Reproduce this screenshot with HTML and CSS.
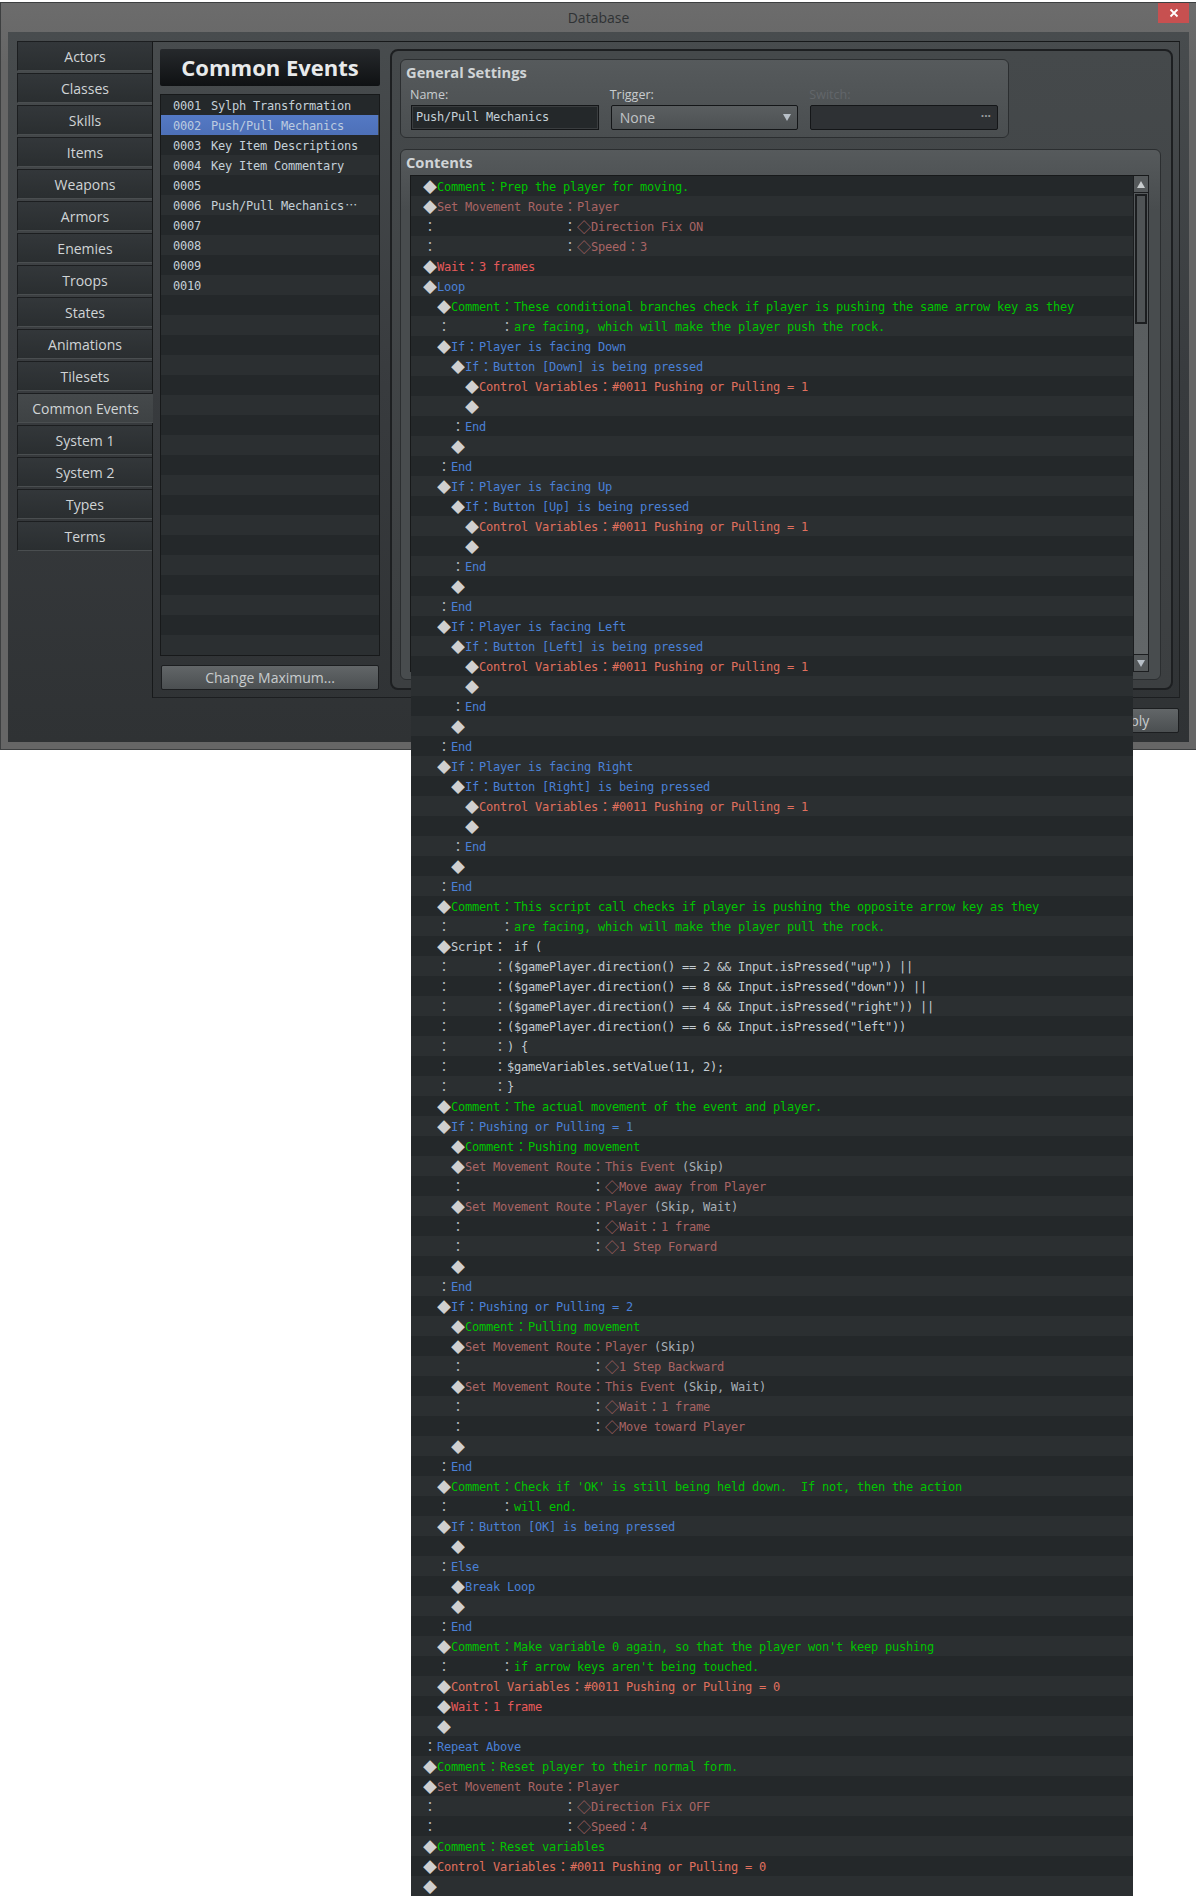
FILE: index.html
```html
<!DOCTYPE html>
<html lang="en">
<head>
  <meta charset="UTF-8">
  <title>Database</title>
  <link rel="stylesheet" href="styles.css">
</head>
<body>
  <div class="window">
    <div class="title">
      Database
      <div class="close">
        <svg width="10" height="10" viewBox="0 0 10 10"><path d="M1.5 1.5l7 7M8.5 1.5l-7 7" stroke="#fff" stroke-width="1.8" fill="none"/></svg>
      </div>
    </div>
    <div class="inner">
      <div class="main">
        <ul class="tabs">
          <li>Actors</li>
          <li>Classes</li>
          <li>Skills</li>
          <li>Items</li>
          <li>Weapons</li>
          <li>Armors</li>
          <li>Enemies</li>
          <li>Troops</li>
          <li>States</li>
          <li>Animations</li>
          <li>Tilesets</li>
          <li class="active">Common Events</li>
          <li>System 1</li>
          <li>System 2</li>
          <li>Types</li>
          <li>Terms</li>
        </ul>
        <div class="frame">
          <div class="leftcol">
            <div class="heading">Common Events</div>
            <ul class="evlist">
              <li><span class="num">0001</span>Sylph Transformation</li>
              <li class="sel"><span class="num">0002</span>Push/Pull Mechanics</li>
              <li><span class="num">0003</span>Key Item Descriptions</li>
              <li><span class="num">0004</span>Key Item Commentary</li>
              <li><span class="num">0005</span></li>
              <li><span class="num">0006</span>Push/Pull Mechanics<span class="more">⋯</span></li>
              <li><span class="num">0007</span></li>
              <li><span class="num">0008</span></li>
              <li><span class="num">0009</span></li>
              <li><span class="num">0010</span></li>
              <li></li><li></li><li></li><li></li><li></li><li></li><li></li><li></li><li></li>
              <li></li><li></li><li></li><li></li><li></li><li></li><li></li><li></li><li></li>
            </ul>
            <div class="btn maxbtn">Change Maximum...</div>
          </div>
          <div class="rightcol">
            <div class="group general">
              <h3>General Settings</h3>
              <div class="fields">
                <div class="field">
                  <label>Name:</label>
                  <div class="input">Push/Pull Mechanics</div>
                </div>
                <div class="field">
                  <label>Trigger:</label>
                  <div class="select">None<span class="arrow-down"></span></div>
                </div>
                <div class="field off">
                  <label>Switch:</label>
                  <div class="picker">...</div>
                </div>
              </div>
            </div>
            <div class="group contents">
              <h3>Contents</h3>
              <div class="listwrap">
                <div class="cmds">
<div class="row com"><i>◆</i>Comment<b>：</b>Prep the player for moving.</div>
<div class="row route"><i>◆</i>Set Movement Route<b>：</b>Player</div>
<div class="row route"><i class="cc">：</i>                  <b class="cc">：</b><i class="h">◇</i>Direction Fix ON</div>
<div class="row route"><i class="cc">：</i>                  <b class="cc">：</b><i class="h">◇</i>Speed<b>：</b>3</div>
<div class="row wait"><i>◆</i>Wait<b>：</b>3 frames</div>
<div class="row flow"><i>◆</i>Loop</div>
<div class="row com l1"><i>◆</i>Comment<b>：</b>These conditional branches check if player is pushing the same arrow key as they</div>
<div class="row com l1"><i class="cc">：</i>       <b class="cc">：</b>are facing, which will make the player push the rock.</div>
<div class="row flow l1"><i>◆</i>If<b>：</b>Player is facing Down</div>
<div class="row flow l2"><i>◆</i>If<b>：</b>Button [Down] is being pressed</div>
<div class="row vars l3"><i>◆</i>Control Variables<b>：</b>#0011 Pushing or Pulling = 1</div>
<div class="row l3"><i>◆</i></div>
<div class="row flow l2"><i class="cc">：</i>End</div>
<div class="row l2"><i>◆</i></div>
<div class="row flow l1"><i class="cc">：</i>End</div>
<div class="row flow l1"><i>◆</i>If<b>：</b>Player is facing Up</div>
<div class="row flow l2"><i>◆</i>If<b>：</b>Button [Up] is being pressed</div>
<div class="row vars l3"><i>◆</i>Control Variables<b>：</b>#0011 Pushing or Pulling = 1</div>
<div class="row l3"><i>◆</i></div>
<div class="row flow l2"><i class="cc">：</i>End</div>
<div class="row l2"><i>◆</i></div>
<div class="row flow l1"><i class="cc">：</i>End</div>
<div class="row flow l1"><i>◆</i>If<b>：</b>Player is facing Left</div>
<div class="row flow l2"><i>◆</i>If<b>：</b>Button [Left] is being pressed</div>
<div class="row vars l3"><i>◆</i>Control Variables<b>：</b>#0011 Pushing or Pulling = 1</div>
<div class="row l3"><i>◆</i></div>
<div class="row flow l2"><i class="cc">：</i>End</div>
<div class="row l2"><i>◆</i></div>
<div class="row flow l1"><i class="cc">：</i>End</div>
<div class="row flow l1"><i>◆</i>If<b>：</b>Player is facing Right</div>
<div class="row flow l2"><i>◆</i>If<b>：</b>Button [Right] is being pressed</div>
<div class="row vars l3"><i>◆</i>Control Variables<b>：</b>#0011 Pushing or Pulling = 1</div>
<div class="row l3"><i>◆</i></div>
<div class="row flow l2"><i class="cc">：</i>End</div>
<div class="row l2"><i>◆</i></div>
<div class="row flow l1"><i class="cc">：</i>End</div>
<div class="row com l1"><i>◆</i>Comment<b>：</b>This script call checks if player is pushing the opposite arrow key as they</div>
<div class="row com l1"><i class="cc">：</i>       <b class="cc">：</b>are facing, which will make the player pull the rock.</div>
<div class="row script l1"><i>◆</i>Script<b>：</b> if (</div>
<div class="row script l1"><i class="cc">：</i>      <b class="cc">：</b>($gamePlayer.direction() == 2 &amp;&amp; Input.isPressed("up")) ||</div>
<div class="row script l1"><i class="cc">：</i>      <b class="cc">：</b>($gamePlayer.direction() == 8 &amp;&amp; Input.isPressed("down")) ||</div>
<div class="row script l1"><i class="cc">：</i>      <b class="cc">：</b>($gamePlayer.direction() == 4 &amp;&amp; Input.isPressed("right")) ||</div>
<div class="row script l1"><i class="cc">：</i>      <b class="cc">：</b>($gamePlayer.direction() == 6 &amp;&amp; Input.isPressed("left"))</div>
<div class="row script l1"><i class="cc">：</i>      <b class="cc">：</b>) {</div>
<div class="row script l1"><i class="cc">：</i>      <b class="cc">：</b>$gameVariables.setValue(11, 2);</div>
<div class="row script l1"><i class="cc">：</i>      <b class="cc">：</b>}</div>
<div class="row com l1"><i>◆</i>Comment<b>：</b>The actual movement of the event and player.</div>
<div class="row flow l1"><i>◆</i>If<b>：</b>Pushing or Pulling = 1</div>
<div class="row com l2"><i>◆</i>Comment<b>：</b>Pushing movement</div>
<div class="row route l2"><i>◆</i>Set Movement Route<b>：</b>This Event <span class="opt">(Skip)</span></div>
<div class="row route l2"><i class="cc">：</i>                  <b class="cc">：</b><i class="h">◇</i>Move away from Player</div>
<div class="row route l2"><i>◆</i>Set Movement Route<b>：</b>Player <span class="opt">(Skip, Wait)</span></div>
<div class="row route l2"><i class="cc">：</i>                  <b class="cc">：</b><i class="h">◇</i>Wait<b>：</b>1 frame</div>
<div class="row route l2"><i class="cc">：</i>                  <b class="cc">：</b><i class="h">◇</i>1 Step Forward</div>
<div class="row l2"><i>◆</i></div>
<div class="row flow l1"><i class="cc">：</i>End</div>
<div class="row flow l1"><i>◆</i>If<b>：</b>Pushing or Pulling = 2</div>
<div class="row com l2"><i>◆</i>Comment<b>：</b>Pulling movement</div>
<div class="row route l2"><i>◆</i>Set Movement Route<b>：</b>Player <span class="opt">(Skip)</span></div>
<div class="row route l2"><i class="cc">：</i>                  <b class="cc">：</b><i class="h">◇</i>1 Step Backward</div>
<div class="row route l2"><i>◆</i>Set Movement Route<b>：</b>This Event <span class="opt">(Skip, Wait)</span></div>
<div class="row route l2"><i class="cc">：</i>                  <b class="cc">：</b><i class="h">◇</i>Wait<b>：</b>1 frame</div>
<div class="row route l2"><i class="cc">：</i>                  <b class="cc">：</b><i class="h">◇</i>Move toward Player</div>
<div class="row l2"><i>◆</i></div>
<div class="row flow l1"><i class="cc">：</i>End</div>
<div class="row com l1"><i>◆</i>Comment<b>：</b>Check if 'OK' is still being held down.  If not, then the action</div>
<div class="row com l1"><i class="cc">：</i>       <b class="cc">：</b>will end.</div>
<div class="row flow l1"><i>◆</i>If<b>：</b>Button [OK] is being pressed</div>
<div class="row l2"><i>◆</i></div>
<div class="row flow l1"><i class="cc">：</i>Else</div>
<div class="row flow l2"><i>◆</i>Break Loop</div>
<div class="row l2"><i>◆</i></div>
<div class="row flow l1"><i class="cc">：</i>End</div>
<div class="row com l1"><i>◆</i>Comment<b>：</b>Make variable 0 again, so that the player won't keep pushing</div>
<div class="row com l1"><i class="cc">：</i>       <b class="cc">：</b>if arrow keys aren't being touched.</div>
<div class="row vars l1"><i>◆</i>Control Variables<b>：</b>#0011 Pushing or Pulling = 0</div>
<div class="row wait l1"><i>◆</i>Wait<b>：</b>1 frame</div>
<div class="row l1"><i>◆</i></div>
<div class="row flow"><i class="cc">：</i>Repeat Above</div>
<div class="row com"><i>◆</i>Comment<b>：</b>Reset player to their normal form.</div>
<div class="row route"><i>◆</i>Set Movement Route<b>：</b>Player</div>
<div class="row route"><i class="cc">：</i>                  <b class="cc">：</b><i class="h">◇</i>Direction Fix OFF</div>
<div class="row route"><i class="cc">：</i>                  <b class="cc">：</b><i class="h">◇</i>Speed<b>：</b>4</div>
<div class="row com"><i>◆</i>Comment<b>：</b>Reset variables</div>
<div class="row vars"><i>◆</i>Control Variables<b>：</b>#0011 Pushing or Pulling = 0</div>
<div class="row"><i>◆</i></div>
                </div>
                <div class="scrollbar">
                  <div class="sbtn"><span class="arrow-up"></span></div>
                  <div class="track"><div class="thumb"></div></div>
                  <div class="sbtn"><span class="arrow-down"></span></div>
                </div>
              </div>
            </div>
          </div>
        </div>
      </div>
      <div class="footer">
        <div class="btn apply">Apply</div>
      </div>
    </div>
  </div>
</body>
</html>
```

FILE: styles.css
```css
* {
  margin: 0;
  padding: 0;
  box-sizing: border-box;
}

html,
body {
  width: 100%;
  height: 1897px;
  overflow: hidden;
  background-color: #fff;
}

body {
  font-family: "Open Sans", "Noto Sans", sans-serif;
  color: #d4d8da;
}

ul {
  list-style: none;
}

.window {
  position: relative;
  display: flex;
  flex-direction: column;
  margin-top: 2px;
  height: 748px;
  padding: 0 7px 7px;
  border: 1px solid #3d3f40;
  border-width: 1px 0 1px 1px;
  background: linear-gradient(#6c6c6c, #666 60px);
}

.title {
  height: 29px;
  line-height: 30px;
  text-align: center;
  font-size: 14px;
  color: #2f3234;
}

.close {
  position: absolute;
  top: 0;
  right: 7px;
  width: 31px;
  height: 20px;
  display: flex;
  align-items: center;
  justify-content: center;
  background-color: #c75050;
}

.inner {
  flex: 1;
  display: flex;
  flex-direction: column;
  padding: 9px 9px 0 9px;
  background: linear-gradient(#484c4e, #383b3e 50%, #2f3234);
}

.main {
  display: flex;
  height: 657px;
}

.tabs {
  width: 135px;
  flex-shrink: 0;
  position: relative;
  z-index: 1;
}

.tabs li {
  height: 30px;
  margin-bottom: 2px;
  line-height: 30px;
  text-align: center;
  font-size: 14px;
  color: #d0d4d6;
  background: linear-gradient(#33373a, #2a2e30);
  border: 1px solid #1c1e20;
  border-right: 0;
  border-bottom-color: #4a4e50;
}

.tabs li.active {
  width: 136px;
  background: linear-gradient(#45494b, #3e4244);
  border-right: 0;
}

.frame {
  flex: 1;
  display: flex;
  gap: 10px;
  padding: 7px 6px 7px 7px;
  border: 1px solid #17191a;
  border-right-color: #1f2122;
  border-bottom-color: #1c1e20;
}

.leftcol {
  width: 220px;
  flex-shrink: 0;
  display: flex;
  flex-direction: column;
}

.heading {
  height: 37px;
  line-height: 36px;
  text-align: center;
  font-size: 22px;
  font-weight: 700;
  color: #e8eaeb;
  background: linear-gradient(#26292c, #0f1113);
  border-radius: 2px;
}

.evlist {
  margin-top: 8px;
  height: 562px;
  border: 1px solid #17191a;
  font-family: "DejaVu Sans Mono", monospace;
  font-size: 12px;
  letter-spacing: -0.224px;
  color: #c4d0d8;
}

.evlist li {
  height: 20px;
  line-height: 22px;
  padding-left: 12px;
  background-color: #2b2f31;
  white-space: pre;
}

.evlist li:nth-child(odd) {
  background-color: #24282a;
}

.evlist li.sel {
  background: linear-gradient(#5479c4, #4d70b8);
  color: #bccbe0;
  margin-right: 1px;
}

.num {
  display: inline-block;
  width: 38px;
}

.more {
  display: inline-block;
  width: 14px;
  text-align: center;
  font-family: "Noto Sans CJK JP", sans-serif;
  line-height: 20px;
  vertical-align: top;
}

.btn {
  height: 25px;
  line-height: 24px;
  text-align: center;
  font-size: 14px;
  color: #c8ccce;
  background: linear-gradient(#626668, #4b4f51);
  border: 1px solid #1c1e20;
  border-radius: 2px;
}

.maxbtn {
  margin: 9px 1px 0;
}

.rightcol {
  flex: 1;
  display: flex;
  flex-direction: column;
  padding: 8px 10px 8px 8px;
  border: 2px solid #1d1f21;
  border-radius: 8px;
  background: linear-gradient(#45494b, #3c3f41);
}

.group {
  border: 1px solid #2b2e30;
  border-radius: 6px;
  background: linear-gradient(#565a5c, #484c4e 60px);
}

.group h3 {
  height: 25px;
  line-height: 25px;
  padding-left: 5px;
  font-size: 14.7px;
  font-weight: 700;
  color: #d0d4d6;
}

.general {
  width: 609px;
  height: 79px;
  flex-shrink: 0;
  background: linear-gradient(#565a5c, #4a4e50);
}

.fields {
  display: flex;
  gap: 12px;
  padding: 0 10px;
}

.field {
  width: 188px;
}

.field label {
  display: block;
  height: 20px;
  line-height: 20px;
  margin-left: -1px;
  font-size: 12.5px;
  color: #c8ccce;
}

.field.off label {
  color: #62666a;
}

.input,
.select,
.picker {
  position: relative;
  height: 25px;
  border: 1px solid #141618;
}

.input {
  padding-left: 4px;
  line-height: 23px;
  background-color: #24282a;
  box-shadow: inset 0 0 0 1px #3a3d3f;
  font-family: "DejaVu Sans Mono", monospace;
  font-size: 12px;
  letter-spacing: -0.224px;
  color: #c4d0d8;
}

.select {
  padding-left: 8px;
  font-size: 14px;
  line-height: 23px;
  color: #c0c4c6;
  border-radius: 2px;
  background: linear-gradient(#5a5e60, #4d5153);
}

.select .arrow-down {
  position: absolute;
  right: 6px;
  top: 8px;
}

.picker {
  padding-right: 6px;
  text-align: right;
  font-size: 12px;
  line-height: 14px;
  font-weight: 700;
  color: #9a9ea0;
  border-radius: 2px;
  background-color: #2e3134;
}

.arrow-up,
.arrow-down {
  display: block;
  width: 0;
  height: 0;
  border-left: 4px solid transparent;
  border-right: 4px solid transparent;
}

.arrow-up {
  border-bottom: 7px solid #c8ccce;
}

.arrow-down {
  border-top: 7px solid #b8c0c8;
}

.contents {
  flex: 1;
  margin-top: 11px;
}

.listwrap {
  display: flex;
  height: 497px;
  margin-left: 9px;
  width: 739px;
  border-top: 1px solid #17191a;
  border-left: 1px solid #17191a;
}

.cmds {
  position: relative;
  z-index: 2;
  width: 722px;
  height: 1720px;
  flex-shrink: 0;
  font-family: "DejaVu Sans Mono", monospace;
  font-size: 12px;
  letter-spacing: -0.224px;
}

.row {
  height: 20px;
  line-height: 23px;
  padding-left: 12px;
  white-space: pre;
  background-color: #2b2f31;
}

.row:nth-child(odd) {
  background-color: #24282a;
}

.row.l1 { padding-left: 26px; }
.row.l2 { padding-left: 40px; }
.row.l3 { padding-left: 54px; }

.row i,
.row b {
  display: inline-block;
  width: 14px;
  height: 20px;
  overflow: hidden;
  text-align: center;
  font-style: normal;
  font-weight: 400;
  font-family: "Noto Sans CJK JP", sans-serif;
  font-size: 13px;
  line-height: 20px;
  letter-spacing: 0;
  vertical-align: top;
}

.row i {
  font-size: 14px;
  color: #d0d0d0;
}

.row i.h {
  color: inherit;
}

.row i.cc,
.row b.cc {
  font-size: 13px;
  color: #b4b8ba;
}

.com { color: #00c400; }
.route { color: #a86464; }
.wait { color: #e85a5a; }
.flow { color: #4a80d6; }
.vars { color: #e0705e; }
.script { color: #c4ccd2; }
.opt { color: #a8b0b8; }

.scrollbar {
  width: 16px;
  flex-shrink: 0;
  display: flex;
  flex-direction: column;
  border: 1px solid #1c1e20;
  border-top: 0;
}

.sbtn {
  height: 16px;
  flex-shrink: 0;
  display: flex;
  align-items: center;
  justify-content: center;
  background-color: #55595b;
}

.track {
  flex: 1;
  padding: 1px;
  background: linear-gradient(#565a5c, #626668);
  border-top: 1px solid #1c1e20;
  border-bottom: 1px solid #1c1e20;
}

.thumb {
  height: 130px;
  border: 2px solid #1c1e20;
  background: #4f5355;
}

.footer {
  display: flex;
  justify-content: flex-end;
  padding: 10px 1px 0 0;
}

.apply {
  width: 96px;
}
```
